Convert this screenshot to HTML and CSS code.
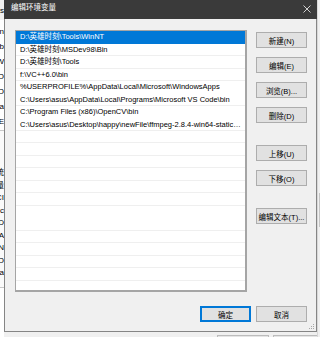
FILE: index.html
```html
<!DOCTYPE html>
<html>
<head>
<meta name="viewport" content="width=device-width, initial-scale=1">
<link rel="stylesheet" href="styles.css">
</head>
<body>

<div class="screen">
  <div class="behind-left">
    <div class="behind-head"><span>Plus</span></div>
    <div class="behind-block">
      <span>Win</span>
      <span>Lib</span>
      <span>W</span>
      <span>NO</span>
      <span>IO</span>
      <span>Pa</span>
      <span>TE</span>
    </div>
    <div class="behind-block behind-block--low">
      <span>系统</span>
      <span>变量</span>
      <span>CI</span>
      <span>Cc</span>
      <span>D</span>
      <span>A</span>
      <span>N</span>
      <span>O</span>
      <span>Pa</span>
    </div>
  </div>

  <div class="dialog-col">
    <div class="dialog">
      <div class="titlebar">
        <span class="title">编辑环境变量</span>
        <svg class="close" width="8" height="8" viewBox="0 0 8 8">
          <path d="M0.5 0.5 L7.5 7.5 M7.5 0.5 L0.5 7.5" stroke="#d0d0d0" stroke-width="1" fill="none"/>
        </svg>
      </div>
      <div class="body">
        <div class="main">
          <ul class="pathlist">
            <li class="selected">D:\英雄时刻\Tools\WinNT</li>
            <li>D:\英雄时刻\MSDev98\Bin</li>
            <li>D:\英雄时刻\Tools</li>
            <li>f:\VC++6.0\bin</li>
            <li>%USERPROFILE%\AppData\Local\Microsoft\WindowsApps</li>
            <li>C:\Users\asus\AppData\Local\Programs\Microsoft VS Code\bin</li>
            <li>C:\Program Files (x86)\OpenCV\bin</li>
            <li>C:\Users\asus\Desktop\happy\newFile\ffmpeg-2.8.4-win64-static\bin</li>
          </ul>
          <div class="actions">
            <div class="group">
              <button class="btn">新建(N)</button>
              <button class="btn">编辑(E)</button>
              <button class="btn">浏览(B)...</button>
              <button class="btn">删除(D)</button>
            </div>
            <div class="group">
              <button class="btn">上移(U)</button>
              <button class="btn">下移(O)</button>
            </div>
            <div class="group">
              <button class="btn">编辑文本(T)...</button>
            </div>
          </div>
        </div>
        <div class="footer">
          <button class="btn btn--default">确定</button>
          <button class="btn">取消</button>
        </div>
      </div>
      <svg class="grip" width="7" height="7" viewBox="0 0 7 7">
        <rect x="5" y="1" width="1" height="1" fill="#a8a8a8"/>
        <rect x="3" y="3" width="1" height="1" fill="#a8a8a8"/>
        <rect x="5" y="3" width="1" height="1" fill="#a8a8a8"/>
        <rect x="1" y="5" width="1" height="1" fill="#a8a8a8"/>
        <rect x="3" y="5" width="1" height="1" fill="#a8a8a8"/>
        <rect x="5" y="5" width="1" height="1" fill="#a8a8a8"/>
      </svg>
    </div>
    <div class="behind-bottom">
      <span class="behind-btn behind-btn--a"></span>
      <span class="behind-btn behind-btn--b"></span>
    </div>
  </div>

  <div class="behind-right">
    <span class="behind-thumb"></span>
  </div>
</div>

</body>
</html>
```

FILE: styles.css
```css
html, body {
  margin: 0;
  padding: 0;
  background: #f0f0f0;
}

body {
  font-family: "Liberation Sans", "Noto Sans CJK SC", sans-serif;
  color: #000;
}

.screen {
  display: flex;
  width: 320px;
  height: 337px;
  overflow: hidden;
}

/* window peeking out behind the dialog */
.behind-left {
  width: 4px;
  flex: none;
  overflow: hidden;
  display: flex;
  flex-direction: column;
  background: #fff;
  font-size: 8px;
}

.behind-head {
  height: 20px;
  background: #f0f0f0;
  display: flex;
  justify-content: flex-end;
  align-items: center;
}

.behind-block {
  display: flex;
  flex-direction: column;
  align-items: flex-end;
  padding-top: 4px;
  height: 106px;
  border-bottom: 1px solid #c8c8c8;
}

.behind-block span,
.behind-head span {
  line-height: 15px;
  white-space: nowrap;
}

.behind-block--low {
  padding-top: 36px;
  height: 120px;
  border-bottom: 1px solid #c8c8c8;
  background: #fafafa;
}

.behind-block--low span {
  line-height: 12.5px;
}

.behind-right {
  width: 3px;
  flex: none;
  position: relative;
  background: #f0f0f0;
  border-left: 1px solid #d8d8d8;
  box-sizing: border-box;
}

.behind-thumb {
  position: absolute;
  left: 1px;
  top: 193px;
  width: 2px;
  height: 34px;
  background: #c6c6c6;
}

.dialog-col {
  width: 313px;
  flex: none;
  display: flex;
  flex-direction: column;
}

.behind-bottom {
  flex: 1;
  position: relative;
}

.behind-btn {
  position: absolute;
  top: 3px;
  height: 6px;
  border: 1px solid #bcbcbc;
  background: #e5e5e5;
}

.behind-btn--a {
  left: 213px;
  width: 50px;
}

.behind-btn--b {
  left: 269px;
  width: 50px;
}

/* the dialog itself */
.dialog {
  position: relative;
  height: 332px;
  box-sizing: border-box;
  border: 1px solid #858585;
  border-top: none;
  background: #f0f0f0;
  display: flex;
  flex-direction: column;
}

.titlebar {
  height: 19px;
  margin: 0 -1px;
  background: #3a3a3a;
  display: flex;
  align-items: flex-start;
  justify-content: space-between;
  padding: 0 6px 0 7px;
}

.title {
  color: #fff;
  font-size: 7.5px;
  line-height: 15px;
}

.close {
  margin-top: 5px;
}

.body {
  flex: 1;
  display: flex;
  flex-direction: column;
  padding: 11px 9px 9px 10px;
}

.main {
  display: flex;
  gap: 9px;
}

.pathlist {
  list-style: none;
  margin: 0;
  padding: 0;
  width: 232px;
  height: 262px;
  box-sizing: border-box;
  border: 1px solid #a5a5a5;
  border-right-width: 2px;
  border-bottom-width: 2px;
  background: #fff repeating-linear-gradient(to bottom, transparent 0 11.5px, #efefef 11.5px 12.5px);
  font-size: 7.5px;
  overflow: hidden;
}

.pathlist li {
  height: 12.5px;
  line-height: 12.5px;
  padding: 0 3px 0 4px;
  white-space: nowrap;
  overflow: hidden;
  text-overflow: ellipsis;
}

.pathlist li.selected {
  background: #0078d7;
  color: #fff;
}

.actions {
  width: 51px;
  padding-top: 2px;
  display: flex;
  flex-direction: column;
  gap: 22px;
}

.group {
  display: flex;
  flex-direction: column;
  gap: 9px;
}

.btn {
  width: 51px;
  height: 16px;
  padding: 0;
  box-sizing: border-box;
  border: 1px solid #adadad;
  background: #e1e1e1;
  font-family: "Liberation Sans", "Noto Sans CJK SC", sans-serif;
  font-size: 7.5px;
  color: #000;
  white-space: nowrap;
  cursor: pointer;
}

.footer {
  margin-top: 14px;
  display: flex;
  justify-content: flex-end;
  gap: 5px;
}

.btn--default {
  border-color: #0078d7;
  box-shadow: inset 0 0 0 1px #0078d7;
}

.grip {
  position: absolute;
  right: 1px;
  bottom: 1px;
}
```
